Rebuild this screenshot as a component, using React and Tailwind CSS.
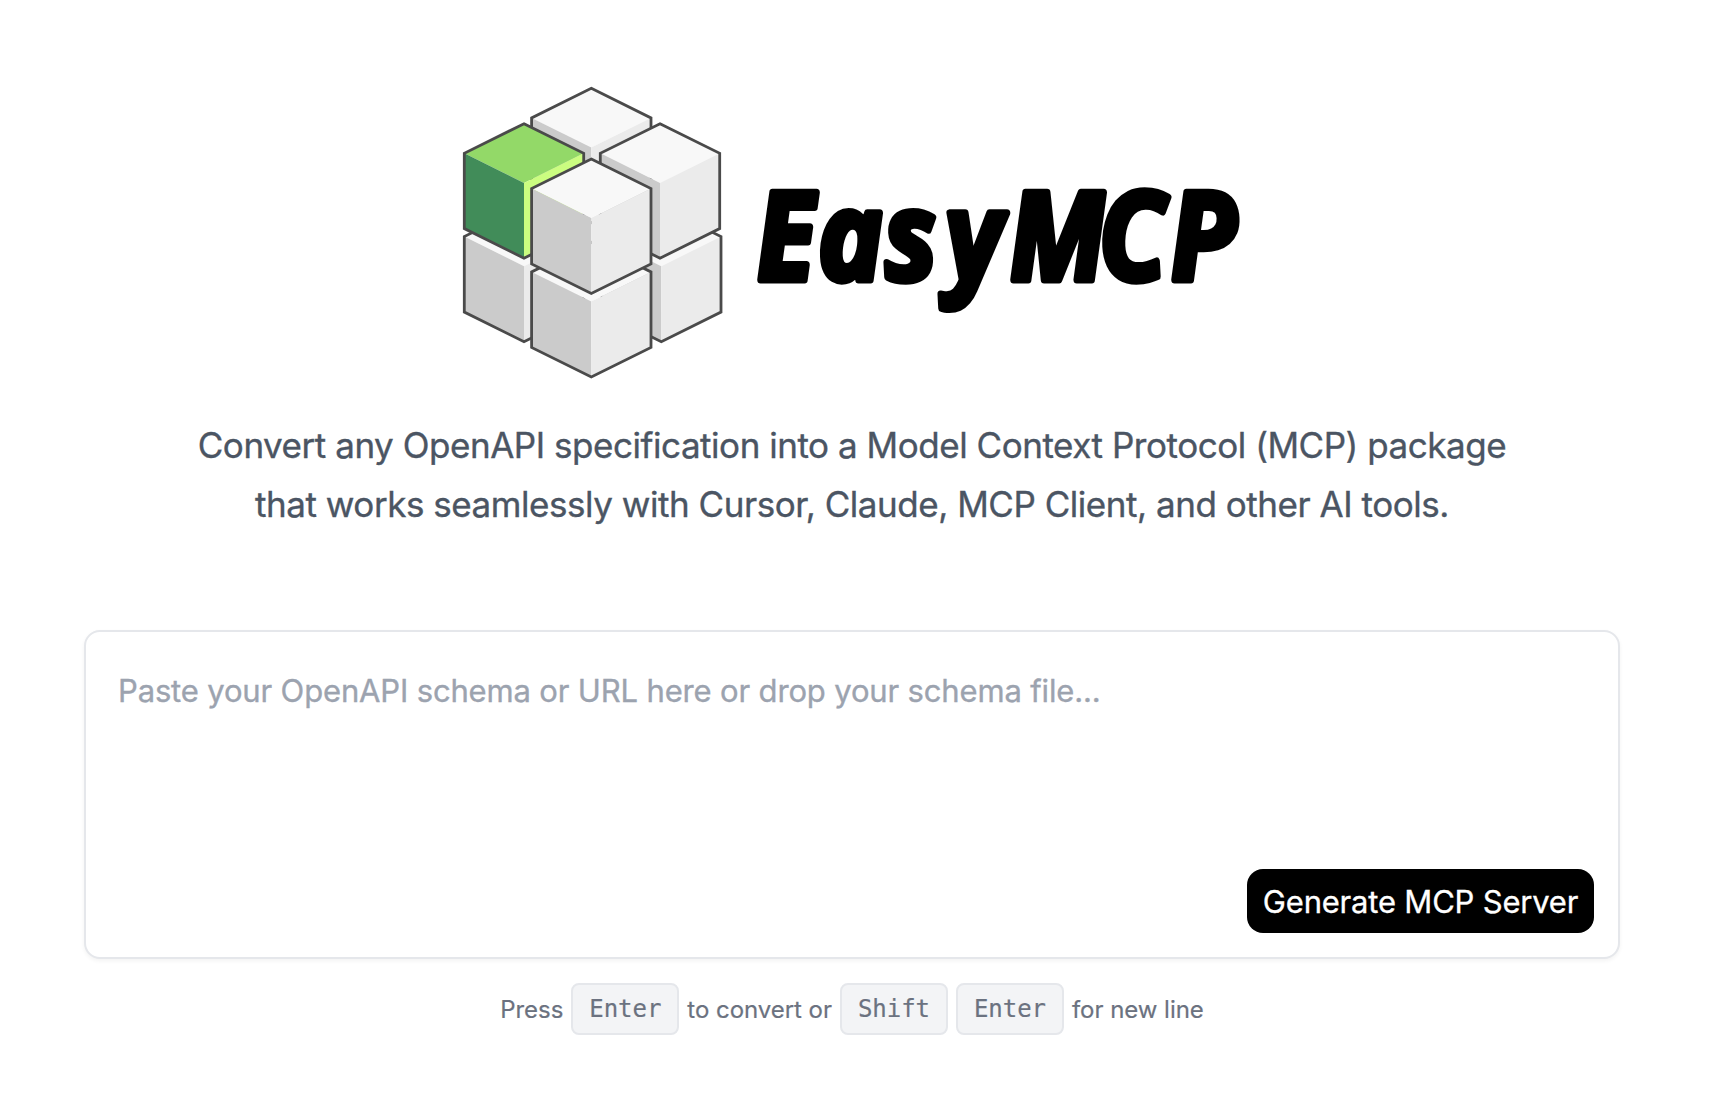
const HALF_W = 59.7;
const HALF_H = 29.6;

function Cube({ x, y, side = 75.3, top = "#f8f8f8", left = "#cbcbcb", right = "#ebebeb" }) {
  const l = x - HALF_W;
  const r = x + HALF_W;
  const mid = y + HALF_H;
  const front = y + 2 * HALF_H;
  return (
    <g>
      <polygon points={`${x},${y} ${r},${mid} ${x},${front} ${l},${mid}`} fill={top} />
      <polygon points={`${l},${mid} ${x},${front} ${x},${front + side} ${l},${mid + side}`} fill={left} />
      <polygon points={`${r},${mid} ${x},${front} ${x},${front + side} ${r},${mid + side}`} fill={right} />
      <polygon
        points={`${x},${y} ${r},${mid} ${r},${mid + side} ${x},${front + side} ${l},${mid + side} ${l},${mid}`}
        fill="none"
        stroke="#4a4a4a"
        strokeWidth="2.8"
      />
    </g>
  );
}

function Logo() {
  return (
    <svg className="block h-[310px] w-[810px]" viewBox="450 75 810 310" role="img" aria-label="EasyMCP">
      <Cube x={524} y={207} side={75.5} />
      <Cube x={661.3} y={207} side={75.5} />
      <Cube x={591.3} y={88.3} />
      <Cube x={591.3} y={242.3} side={75.5} />
      <Cube x={524} y={123.7} top="#93d968" left="#418c59" right="#cbfd80" />
      <Cube x={660} y={123.7} />
      <Cube x={591.3} y={159} />
      <text
        transform="translate(757.5 280) skewX(3) scale(0.9 1)"
        x="0 69 143 211 281 381 460"
        y="0"
        fontFamily="'Open Sans', sans-serif"
        fontSize="123"
        fontWeight="700"
        fontStyle="italic"
        stroke="#000"
        strokeWidth="7"
        strokeLinejoin="round"
      >
        EasyMCP
      </text>
    </svg>
  );
}

function Key({ children }) {
  return (
    <kbd className="flex h-[52px] w-[108px] items-center justify-center rounded-lg border-2 border-[#e5e7eb] bg-[#f3f4f6] font-['DejaVu_Sans_Mono',monospace] text-[24px] leading-[48px]">
      {children}
    </kbd>
  );
}

export default function App() {
  return (
    <main className="flex h-[1100px] w-[1710px] flex-col items-center bg-white pr-[6px] pt-[75px] font-[Inter,sans-serif]">
      <div className="ml-[6px]">
        <Logo />
      </div>
      <p className="mt-[31px] text-center text-[35px] leading-[59px] tracking-[-0.46px] whitespace-nowrap text-[#4b5563] [-webkit-text-stroke:0.35px_#4b5563]">
        Convert any OpenAPI specification into a Model Context Protocol (MCP) package
        <br />
        that works seamlessly with Cursor, Claude, MCP Client, and other AI tools.
      </p>
      <div className="mt-[96px] flex h-[329px] w-[1536px] flex-col justify-between rounded-2xl border-2 border-[#e5e7eb] bg-white pt-[35px] pr-6 pb-6 pl-8 shadow-[0_2px_4px_rgba(0,0,0,0.05)]">
        <span className="text-[31px] leading-[48px] tracking-[-0.155px] text-[#9ca3af] [-webkit-text-stroke:0.35px_#9ca3af]">
          Paste your OpenAPI schema or URL here or drop your schema file...
        </span>
        <button className="h-16 w-[347px] self-end rounded-2xl bg-black pt-0.5 text-[31px] tracking-[-0.2px] whitespace-nowrap text-white [-webkit-text-stroke:0.3px_white]">
          Generate MCP Server
        </button>
      </div>
      <div className="mt-6 flex items-center gap-2 text-[24px] tracking-[-0.04px] text-[#6b7280] [-webkit-text-stroke:0.2px_#6b7280]">
        <span className="pt-0.5">Press</span>
        <Key>Enter</Key>
        <span className="pt-0.5">to convert or</span>
        <Key>Shift</Key>
        <Key>Enter</Key>
        <span className="pt-0.5">for new line</span>
      </div>
    </main>
  );
}
